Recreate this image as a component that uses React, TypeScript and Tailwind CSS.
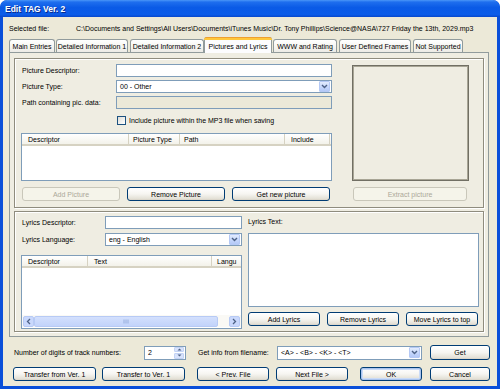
import React from "react";

const FONT = "font-['Liberation_Sans',Arial,sans-serif]";

function Btn({ className = "", disabled = false, def = false, children }: { className?: string; disabled?: boolean; def?: boolean; children: React.ReactNode }) {
  const base = "flex shrink-0 items-center justify-center h-[14px] rounded-[3px] border text-[7px] leading-none whitespace-nowrap";
  const look = disabled
    ? "border-[#C9C7BA] bg-[#F5F4EA] text-[#ACA899]"
    : "border-[#003C74] bg-[linear-gradient(180deg,#FFFFFF_0%,#F6F5F1_50%,#E3E0D6_90%,#D6D0C5_100%)] text-black";
  const d = def ? "shadow-[inset_0_0_0_1px_#A9C3EE,inset_0_0_0_2px_#CADBF7]" : "";
  return <div className={`${base} ${look} ${d} ${className}`}>{children}</div>;
}

function Arrow() {
  return (
    <div className="flex h-[11px] w-[11px] shrink-0 items-center justify-center rounded-[1px] border border-[#B5C9F5] bg-[linear-gradient(180deg,#E3ECFD_0%,#C3D5FB_60%,#B4C9F7_100%)]">
      <svg width="7" height="5" viewBox="0 0 7 5">
        <path d="M1 1 L3.5 3.5 L6 1" fill="none" stroke="#4D6185" strokeWidth="1.4" />
      </svg>
    </div>
  );
}

function Input({ className = "", disabled = false, children }: { className?: string; disabled?: boolean; children?: React.ReactNode }) {
  return (
    <div className={`flex shrink-0 items-center border border-[#7F9DB9] ${disabled ? "bg-[#ECE9D8]" : "bg-white"} pl-[3px] text-[7px] leading-none ${className}`}>
      {children}
    </div>
  );
}

function Select({ className = "", children }: { className?: string; children?: React.ReactNode }) {
  return (
    <div className={`flex shrink-0 items-center justify-between border border-[#7F9DB9] bg-white pl-[3px] pr-[1px] text-[7px] leading-none ${className}`}>
      <span>{children}</span>
      <Arrow />
    </div>
  );
}

function HeadCell({ className = "", children, last = false }: { className?: string; children?: React.ReactNode; last?: boolean }) {
  return (
    <div className={`flex h-full shrink-0 items-center pl-[6px] overflow-hidden whitespace-nowrap ${last ? "" : "border-r border-[#D6D2C2]"} ${className}`}>
      {children}
    </div>
  );
}

function Tab({ className = "", selected = false, children }: { className?: string; selected?: boolean; children: React.ReactNode }) {
  if (selected) {
    return (
      <div className={`relative z-10 -mb-[1px] flex h-[16px] shrink-0 items-center justify-center rounded-t-[3px] border border-b-0 border-[#919B9C] bg-[#FCFCFE] text-[7px] leading-none whitespace-nowrap ${className}`}>
        <div className="absolute left-[-1px] right-[-1px] top-[-1px] h-[3px] rounded-t-[3px] bg-[linear-gradient(180deg,#E68B2C_0%,#FFC73C_50%,#FFC73C_100%)]" />
        <span className="mt-[2px]">{children}</span>
      </div>
    );
  }
  return (
    <div className={`flex h-[13px] shrink-0 items-center justify-center rounded-t-[3px] border border-b-0 border-[#919B9C] bg-[linear-gradient(180deg,#FFFFFF_0%,#F7F6F2_50%,#ECEBE6_100%)] text-[7px] leading-none whitespace-nowrap ${className}`}>
      {children}
    </div>
  );
}

export default function App() {
  return (
    <div className={`${FONT} flex h-[389px] w-[500px] flex-col overflow-hidden rounded-t-[7px] bg-[#0A4FD9] text-black`}>
      {/* title bar */}
      <div className="flex h-[17px] shrink-0 items-start rounded-t-[7px] bg-[linear-gradient(180deg,#4A96F8_0%,#1E6EEE_12%,#0A5AE6_45%,#0B5CE9_85%,#0848CC_100%)] pl-[5px] pt-[5px] text-[8.5px] font-bold leading-none text-white [text-shadow:1px_1px_0_#0A2A8A]">
        Edit TAG Ver. 2
      </div>
      {/* body */}
      <div className="mx-[3px] mb-[3px] flex flex-1 flex-col bg-[#ECE9D8]">
        {/* selected file */}
        <div className="mt-[7px] flex h-[9px] items-center pl-[6px] text-[7px] leading-none whitespace-nowrap">
          <div className="w-[67px] shrink-0">Selected file:</div>
          <div>C:\Documents and Settings\All Users\Documents\iTunes Music\Dr. Tony Phillips\Science@NASA\727 Friday the 13th, 2029.mp3</div>
        </div>
        {/* tabs */}
        <div className="mt-[4px] flex h-[15px] items-end pl-[6px]">
          <Tab className="w-[46px]">Main Entries</Tab>
          <Tab className="ml-[1px] w-[72px]">Detailed Information 1</Tab>
          <Tab className="ml-[2px] w-[74px]">Detailed Information 2</Tab>
          <Tab selected className="w-[68px]">Pictures and Lyrics</Tab>
          <Tab className="ml-[1px] w-[64px]">WWW and Rating</Tab>
          <Tab className="ml-[2px] w-[72px]">User Defined Frames</Tab>
          <Tab className="ml-[2px] w-[50px]">Not Supported</Tab>
        </div>
        {/* panel */}
        <div className="ml-[6px] flex h-[285px] w-[480px] flex-col border border-[#919B9C] bg-[#EFEDE2] text-[7px] leading-none">
          {/* upper group */}
          <div className="ml-[4px] mt-[5px] flex h-[150px] w-[470px] border border-[#8F8C7E] shadow-[inset_1px_1px_0_#FFFFFF,1px_1px_0_#FFFFFF]">
            <div className="ml-[6px] flex w-[311px] flex-col">
              <div className="mt-[5px] flex h-[13px] items-center">
                <div className="ml-[1px] w-[94px]">Picture Descriptor:</div>
                <Input className="h-[13px] w-[216px]" />
              </div>
              <div className="mt-[3px] flex h-[13px] items-center">
                <div className="ml-[1px] w-[94px]">Picture Type:</div>
                <Select className="h-[13px] w-[216px]">00 - Other</Select>
              </div>
              <div className="mt-[3px] flex h-[13px] items-center">
                <div className="ml-[1px] w-[94px]">Path containing pic. data:</div>
                <Input disabled className="h-[13px] w-[216px]" />
              </div>
              <div className="mt-[6px] flex h-[11px] items-center">
                <div className="ml-[96px] h-[9px] w-[9px] border border-[#1C5180] bg-[linear-gradient(135deg,#DCDCD7_0%,#FFFFFF_100%)]" />
                <div className="ml-[3px]">Include picture within the MP3 file when saving</div>
              </div>
              <div className="mt-[7px] flex h-[48px] w-[311px] flex-col border border-[#7F9DB9] bg-white">
                <div className="flex h-[12px] items-center border-b-2 border-[#D6D2C2] bg-[linear-gradient(180deg,#FFFFFF_0%,#F3F2EA_100%)]">
                  <HeadCell className="w-[107px]">Descriptor</HeadCell>
                  <HeadCell className="w-[51px] !pl-[4px]">Picture Type</HeadCell>
                  <HeadCell className="w-[105px] !pl-[4px]">Path</HeadCell>
                  <HeadCell className="w-[45px]">Include</HeadCell>
                </div>
              </div>
              <div className="mt-[6px] flex h-[14px]">
                <Btn disabled className="ml-[1px] w-[98px]">Add Picture</Btn>
                <Btn className="ml-[7px] w-[98px]">Remove Picture</Btn>
                <Btn className="ml-[7px] w-[98px]">Get new picture</Btn>
              </div>
            </div>
            <div className="ml-[20px] flex flex-col">
              <div className="mt-[6px] h-[116px] w-[117px] border border-[#716F64] shadow-[inset_1px_1px_0_#A8A595,inset_-1px_-1px_0_#A8A595]" />
              <Btn disabled className="ml-[1px] mt-[6px] w-[114px]">Extract picture</Btn>
            </div>
          </div>
          {/* lower group */}
          <div className="ml-[4px] mt-[3px] flex h-[121px] w-[470px] border border-[#8F8C7E] shadow-[inset_1px_1px_0_#FFFFFF,1px_1px_0_#FFFFFF]">
            <div className="ml-[6px] flex w-[221px] flex-col">
              <div className="mt-[4px] flex h-[13px] items-center">
                <div className="ml-[1px] w-[83px]">Lyrics Descriptor:</div>
                <Input className="h-[13px] w-[137px]" />
              </div>
              <div className="mt-[4px] flex h-[13px] items-center">
                <div className="ml-[1px] w-[83px]">Lyrics Language:</div>
                <Select className="h-[13px] w-[137px]">eng - English</Select>
              </div>
              <div className="mt-[9px] flex h-[74px] w-[221px] flex-col border border-[#7F9DB9] bg-white">
                <div className="flex h-[12px] items-center border-b-2 border-[#D6D2C2] bg-[linear-gradient(180deg,#FFFFFF_0%,#F3F2EA_100%)]">
                  <HeadCell className="w-[66px]">Descriptor</HeadCell>
                  <HeadCell className="w-[124px]">Text</HeadCell>
                  <HeadCell last className="w-[29px] !pl-[5px]">Langu</HeadCell>
                </div>
                <div className="flex-1" />
                <div className="mb-[1px] flex h-[12px] items-center bg-[#FAF9F5] px-[1px]">
                  <div className="flex h-[11px] w-[11px] items-center justify-center rounded-[2px] border border-[#B7CAF5] bg-[#C9D8FC]">
                    <svg width="5" height="7" viewBox="0 0 5 7"><path d="M4 1 L1.5 3.5 L4 6" fill="none" stroke="#4D6185" strokeWidth="1.3" /></svg>
                  </div>
                  <div className="flex h-[11px] w-[184px] items-center justify-center rounded-[2px] border border-[#B7CAF5] bg-[linear-gradient(180deg,#D3E0FD_0%,#C2D3FB_100%)]">
                    <svg width="6" height="5" viewBox="0 0 6 5"><path d="M1 0.5V4.5M3 0.5V4.5M5 0.5V4.5" stroke="#8AA3D6" strokeWidth="0.8" /></svg>
                  </div>
                  <div className="flex-1" />
                  <div className="flex h-[11px] w-[11px] items-center justify-center rounded-[2px] border border-[#B7CAF5] bg-[#C9D8FC]">
                    <svg width="5" height="7" viewBox="0 0 5 7"><path d="M1 1 L3.5 3.5 L1 6" fill="none" stroke="#4D6185" strokeWidth="1.3" /></svg>
                  </div>
                </div>
              </div>
            </div>
            <div className="ml-[6px] flex w-[231px] flex-col">
              <div className="mt-[5px] flex h-[9px] items-center">Lyrics Text:</div>
              <div className="mt-[7px] h-[74px] w-[231px] border border-[#7F9DB9] bg-white" />
              <div className="mt-[5px] flex h-[14px]">
                <Btn className="w-[72px]">Add Lyrics</Btn>
                <Btn className="ml-[7px] w-[72px]">Remove Lyrics</Btn>
                <Btn className="ml-[7px] w-[72px]">Move Lyrics to top</Btn>
              </div>
            </div>
          </div>
        </div>
        {/* bottom row 1 */}
        <div className="mt-[8px] flex h-[15px] items-center text-[7px] leading-none whitespace-nowrap">
          <div className="ml-[11px] w-[130px]">Number of digits of track numbers:</div>
          <div className="flex h-[14px] w-[42px] items-center justify-between border border-[#7F9DB9] bg-white pl-[3px] pr-[1px]">
            <span>2</span>
            <div className="flex h-[12px] w-[10px] flex-col gap-[1px]">
              <div className="flex flex-1 items-center justify-center rounded-[1px] border border-[#C3D3F5] bg-[#D8E3FC]">
                <svg width="5" height="3" viewBox="0 0 5 3"><path d="M0.5 2.5 L2.5 0.5 L4.5 2.5Z" fill="#4D6185" /></svg>
              </div>
              <div className="flex flex-1 items-center justify-center rounded-[1px] border border-[#C3D3F5] bg-[#D8E3FC]">
                <svg width="5" height="3" viewBox="0 0 5 3"><path d="M0.5 0.5 L2.5 2.5 L4.5 0.5Z" fill="#4D6185" /></svg>
              </div>
            </div>
          </div>
          <div className="ml-[12px] w-[79px]">Get info from filename:</div>
          <Select className="h-[14px] w-[145px]">&lt;A&gt; - &lt;B&gt; - &lt;K&gt; - &lt;T&gt;</Select>
          <Btn className="ml-[8px] h-[15px] w-[60px]">Get</Btn>
        </div>
        {/* bottom row 2 */}
        <div className="mt-[7px] flex h-[14px]">
          <Btn className="ml-[10px] w-[83px]">Transfer from Ver. 1</Btn>
          <Btn className="ml-[6px] w-[83px]">Transfer to Ver. 1</Btn>
          <Btn className="ml-[12px] w-[72px]">&lt; Prev. File</Btn>
          <Btn className="ml-[7px] w-[72px]">Next File &gt;</Btn>
          <Btn def className="ml-[12px] w-[62px]">OK</Btn>
          <Btn className="ml-[8px] w-[60px]">Cancel</Btn>
        </div>
      </div>
    </div>
  );
}
